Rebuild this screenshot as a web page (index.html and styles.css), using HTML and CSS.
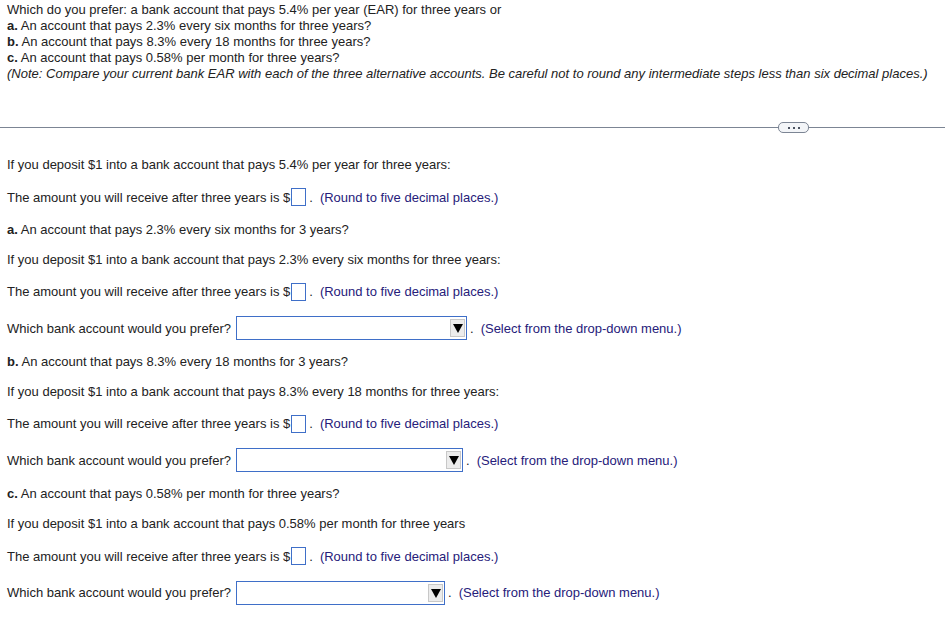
FILE: index.html
```html
<!DOCTYPE html>
<html>
<head>
<meta charset="utf-8">
<link rel="stylesheet" href="styles.css">
</head>
<body>
<div class="question">
  <div class="qline">Which do you prefer: a bank account that pays 5.4% per year (EAR) for three years or</div>
  <div class="qline"><b>a.</b> An account that pays 2.3% every six months for three years?</div>
  <div class="qline"><b>b.</b> An account that pays 8.3% every 18 months for three years?</div>
  <div class="qline"><b>c.</b> An account that pays 0.58% per month for three years?</div>
  <div class="qline note">(Note: Compare your current bank EAR with each of the three alternative accounts. Be careful not to round any intermediate steps less than six decimal places.)</div>
</div>

<div class="divider">
  <span class="pill"><i></i><i></i><i></i></span>
</div>

<div class="work">
  <div class="row">If you deposit $1 into a bank account that pays 5.4% per year for three years:</div>
  <div class="row irow">The amount you will receive after three years is $<span class="box"></span><span class="dot">.</span><span class="hint">(Round to five decimal places.)</span></div>
  <div class="row"><b>a.</b> An account that pays 2.3% every six months for 3 years?</div>
  <div class="row">If you deposit $1 into a bank account that pays 2.3% every six months for three years:</div>
  <div class="row irow">The amount you will receive after three years is $<span class="box"></span><span class="dot">.</span><span class="hint">(Round to five decimal places.)</span></div>
  <div class="row drow">Which bank account would you prefer?<span class="select w1"><span class="arrow"></span></span><span class="dot">.</span><span class="hint">(Select from the drop-down menu.)</span></div>
  <div class="row"><b>b.</b> An account that pays 8.3% every 18 months for 3 years?</div>
  <div class="row">If you deposit $1 into a bank account that pays 8.3% every 18 months for three years:</div>
  <div class="row irow">The amount you will receive after three years is $<span class="box"></span><span class="dot">.</span><span class="hint">(Round to five decimal places.)</span></div>
  <div class="row drow">Which bank account would you prefer?<span class="select w2"><span class="arrow"></span></span><span class="dot">.</span><span class="hint">(Select from the drop-down menu.)</span></div>
  <div class="row"><b>c.</b> An account that pays 0.58% per month for three years?</div>
  <div class="row">If you deposit $1 into a bank account that pays 0.58% per month for three years</div>
  <div class="row irow">The amount you will receive after three years is $<span class="box"></span><span class="dot">.</span><span class="hint">(Round to five decimal places.)</span></div>
  <div class="row drow">Which bank account would you prefer?<span class="select w3"><span class="arrow"></span></span><span class="dot">.</span><span class="hint">(Select from the drop-down menu.)</span></div>
</div>
</body>
</html>
```

FILE: styles.css
```css
html, body {
  margin: 0;
  padding: 0;
  background: #ffffff;
}
body {
  font-family: "Liberation Sans", Arial, sans-serif;
  font-size: 13px;
  color: #222222;
  width: 945px;
  height: 628px;
  overflow: hidden;
}
.question {
  padding: 2px 0 0 7px;
}
.qline {
  line-height: 16px;
  white-space: nowrap;
}
.note {
  font-style: italic;
}
.divider {
  position: relative;
  margin-top: 45px;
  height: 1px;
  background: #7c8594;
}
.pill {
  position: absolute;
  left: 778px;
  top: -5px;
  width: 29px;
  height: 9px;
  border: 1px solid #7c8594;
  border-radius: 5px;
  background: #f3f5f8;
  display: flex;
  align-items: center;
  justify-content: center;
  gap: 3px;
}
.pill i {
  display: block;
  width: 2px;
  height: 2px;
  background: #4a5260;
}
.work {
  padding: 29px 0 0 7px;
}
.row {
  height: 16px;
  line-height: 16px;
  margin-bottom: 13.55px;
  white-space: nowrap;
}
.irow {
  height: 22px;
  line-height: 22px;
}
.drow {
  height: 24px;
  line-height: 24px;
}
.box {
  display: inline-block;
  vertical-align: middle;
  width: 13px;
  height: 16px;
  border: 1px solid #3f6fc8;
  margin-left: 1px;
  margin-top: -2px;
}
.dot {
  margin-left: 3px;
}
.hint {
  margin-left: 7px;
  color: #26207a;
}
.select {
  position: relative;
  display: inline-block;
  vertical-align: middle;
  height: 22px;
  border: 1px solid #3f6fc8;
  margin-left: 5px;
  margin-top: -2px;
  background: #fff;
}
.w1 { width: 229px; }
.w2 { width: 225px; }
.w3 { width: 207px; }
.arrow {
  position: absolute;
  right: 1px;
  top: 2px;
  width: 15px;
  height: 18px;
  background: #ececec;
  border: 1px solid #c8c8c8;
  box-sizing: border-box;
}
.arrow::after {
  content: "";
  position: absolute;
  left: 2px;
  top: 4px;
  border-left: 5px solid transparent;
  border-right: 5px solid transparent;
  border-top: 9px solid #000;
}
```
